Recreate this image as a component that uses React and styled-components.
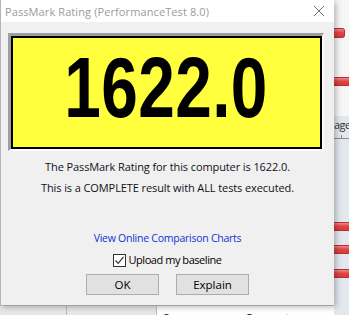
import React from "react";
import styled, { createGlobalStyle } from "styled-components";

const GlobalStyle = createGlobalStyle`
  html, body {
    margin: 0;
    padding: 0;
    background: #e9edf2;
  }
  body {
    font-family: "Open Sans", "Noto Sans", sans-serif;
  }
`;

const Page = styled.div`
  width: 349px;
  height: 315px;
  display: grid;
  grid-template-columns: 334px 15px;
  grid-template-rows: 305px 10px;
  overflow: hidden;
  background: #f4f5f7;
`;

const Window = styled.div`
  grid-column: 1;
  grid-row: 1;
  position: relative;
  z-index: 2;
  display: flex;
  flex-direction: column;
  background: #f0f0f0;
  border-left: 1px solid #b4b4b4;
  box-shadow: 2px 2px 6px rgba(0, 0, 0, 0.28);
`;

const TitleBar = styled.div`
  height: 22px;
  flex-shrink: 0;
  display: flex;
  align-items: center;
  justify-content: space-between;
  padding: 0 9px 0 4px;
  background: #fff;
  color: #9b9b9b;
  font-family: "Open Sans", sans-serif;
  font-size: 11px;
  letter-spacing: 0.1px;
`;

const CloseIcon = styled.svg`
  width: 12px;
  height: 12px;
  margin-top: -1px;
`;

const Body = styled.div`
  flex: 1;
  display: flex;
  flex-direction: column;
  align-items: center;
  padding-top: 11px;
`;

const Frame = styled.div`
  align-self: flex-start;
  margin-left: 7px;
  width: 316px;
  height: 118px;
  box-sizing: border-box;
  border-style: solid;
  border-width: 3px 2px 2px 3px;
  border-color: #a0a0a0 #fbfbfb #fbfbfb #a0a0a0;
`;

const Score = styled.div`
  height: 100%;
  box-sizing: border-box;
  border: 2px solid #000;
  background: #ffff3e;
  display: flex;
  align-items: center;
  justify-content: center;
  padding-bottom: 11px;
`;

const ScoreText = styled.span`
  font-family: "Liberation Sans", Arial, sans-serif;
  font-weight: 700;
  font-size: 86px;
  line-height: 1;
  color: #000;
  transform: scaleX(0.765);
  letter-spacing: 0.5px;
`;

const Line = styled.div`
  font-size: 11px;
  letter-spacing: -0.1px;
  line-height: 21px;
  color: #101020;
  margin-top: ${(p) => p.$top || 0}px;
`;

const Link = styled.a`
  margin-top: 32px;
  font-size: 10.5px;
  letter-spacing: -0.25px;
  line-height: 16px;
  color: #1030d8;
  text-decoration: none;
`;

const CheckRow = styled.label`
  margin-top: 6px;
  display: flex;
  align-items: center;
  gap: 2px;
  font-size: 11px;
  letter-spacing: -0.45px;
  line-height: 16px;
  color: #000;
`;

const Box = styled.span`
  width: 13px;
  height: 13px;
  box-sizing: border-box;
  border: 1px solid #333;
  background: #fff;
  display: flex;
  align-items: center;
  justify-content: center;
`;

const Buttons = styled.div`
  margin-top: 6px;
  display: flex;
  gap: 17px;
`;

const Button = styled.button`
  width: 73px;
  height: 21px;
  box-sizing: border-box;
  border: 1px solid #adadad;
  background: #e1e1e1;
  font-family: "Open Sans", sans-serif;
  font-size: 11.5px;
  color: #000;
  padding: 0;
`;

const Side = styled.div`
  grid-column: 2;
  grid-row: 1 / 3;
  display: flex;
  flex-direction: column;
  background: #f6f6f6;
`;

const Bar = styled.div`
  height: ${(p) => p.$h || 9}px;
  margin-top: ${(p) => p.$top}px;
  width: ${(p) => (p.$short ? "11px" : "100%")};
  box-sizing: border-box;
  background: linear-gradient(#f08a8a, #e24646 45%, #d63a3a);
  border: 1px solid #b83030;
  border-left: none;
  border-right-width: ${(p) => (p.$short ? "1px" : "0")};
  border-radius: ${(p) => (p.$short ? "0 3px 3px 0" : "0")};
`;

const Panel = styled.div`
  margin-top: 30px;
  flex: 1;
  background: #e3e8ef;
  display: flex;
  flex-direction: column;
`;

const Header = styled.div`
  height: 22px;
  border-bottom: 1px solid #8a8f96;
  font-size: 11px;
  letter-spacing: -0.6px;
  line-height: 18px;
  color: #333;
  white-space: nowrap;
  position: relative;
`;

const Tick = styled.span`
  position: absolute;
  left: 7px;
  bottom: 0;
  width: 1px;
  height: 3px;
  background: #8a8f96;
`;

const Footer = styled.div`
  grid-column: 1;
  grid-row: 2;
  display: grid;
  grid-template-columns: 67px 90px 1fr;
  background: #fff;
  border-top: 1px solid #c8c8c8;
`;

const Cell = styled.div`
  box-sizing: border-box;
  border-right: ${(p) => (p.$line ? "1px solid #bdbdbd" : "none")};
  background: ${(p) => (p.$grey ? "#e7e7e7" : "#fff")};
  font-size: 12px;
  line-height: 14px;
  padding-top: 6px;
  padding-left: 6px;
  color: #222;
  white-space: pre;
  overflow: hidden;
`;

export default function App() {
  return (
    <>
      <GlobalStyle />
      <Page>
        <Window>
          <TitleBar>
            <span>PassMark Rating (PerformanceTest 8.0)</span>
            <CloseIcon viewBox="0 0 12 12">
              <path d="M1 1 L11 11 M11 1 L1 11" stroke="#6e6e6e" strokeWidth="1" fill="none" />
            </CloseIcon>
          </TitleBar>
          <Body>
            <Frame>
              <Score>
                <ScoreText>1622.0</ScoreText>
              </Score>
            </Frame>
            <Line $top={5}>The PassMark Rating for this computer is 1622.0.</Line>
            <Line>This is a COMPLETE result with ALL tests executed.</Line>
            <Link href="#">View Online Comparison Charts</Link>
            <CheckRow>
              <Box>
                <svg width="11" height="11" viewBox="0 0 11 11">
                  <path d="M1.5 5.5 L4.2 8.3 L9.5 1.8" stroke="#333" strokeWidth="1.2" fill="none" />
                </svg>
              </Box>
              Upload my baseline
            </CheckRow>
            <Buttons>
              <Button>OK</Button>
              <Button>Explain</Button>
            </Buttons>
          </Body>
        </Window>
        <Side>
          <Bar $short $top={28} $h={10} />
          <Bar $top={39} />
          <Panel>
            <Header>
              age
              <Tick />
            </Header>
            <Bar $top={83} />
            <Bar $top={14} />
            <Bar $top={15} />
          </Panel>
        </Side>
        <Footer>
          <Cell $grey $line />
          <Cell $grey $line />
          <Cell>{"8                        Computer"}</Cell>
        </Footer>
      </Page>
    </>
  );
}
